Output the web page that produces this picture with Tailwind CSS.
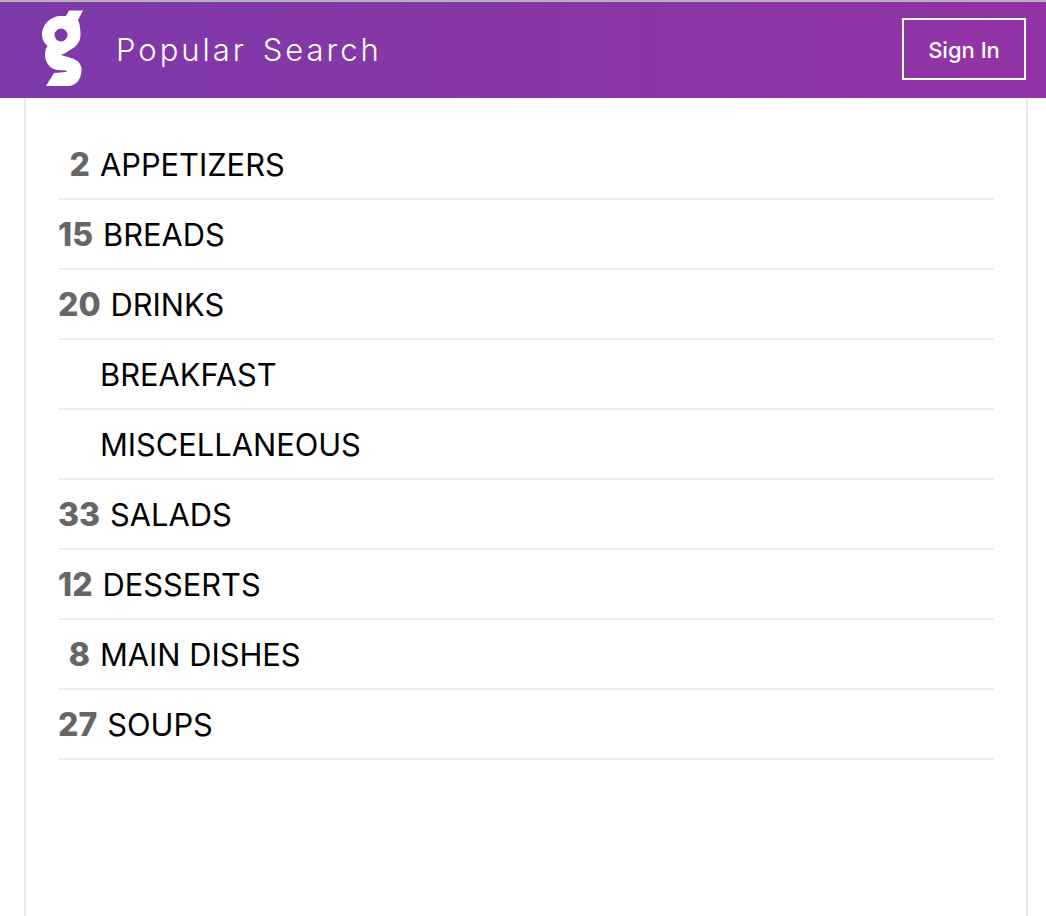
<!DOCTYPE html>
<html>
<head><title>Popular Search</title><script src="https://cdn.jsdelivr.net/npm/@tailwindcss/browser@4"></script></head>
<body class="bg-white font-['Inter',sans-serif] h-[916px] overflow-hidden flex flex-col">
  <header class="h-[98px] shrink-0 border-t-2 border-[#b5b0b8] bg-gradient-to-r from-[#7d39a9] to-[#9333a5] flex items-center pl-[42px] pr-[20px]">
    <svg class="w-[42px] h-[77px] shrink-0 -mt-[4px]" viewBox="0 0 42 77" fill="#fff">
      <path fill-rule="evenodd" d="M27 0.5 L41 0.5 L36 10 C38 14 38.5 20 38.5 25 C38.5 32 34 37 28 40 C25 42 22 44 19 45 C22 46 26 47 29 48 C36 50 39.5 54 39.5 60 C39.5 69 34 76 26 76 L4 76 L12 63 L24 62 C25 61.5 25 60.5 24 60.5 L15 60 C8 59 3 52 3 45 C3 41 4 38 5.5 36 C2 33 0 29 0 25 C0 14 9 6 19 6 C21 6 23 6 24 6 Z M19 18.5 A6.5 6.5 0 1 0 19.01 31.5 A6.5 6.5 0 1 0 19 18.5 Z"/>
    </svg>
    <h1 class="ml-[32px] -mt-[1px] text-[31px] font-[350] text-white tracking-[3px] [word-spacing:4px] leading-none">Popular Search</h1>
    <a href="#" class="ml-auto -mt-[2px] pt-[2px] w-[124px] h-[62px] border-2 border-white text-white text-[22px] font-medium flex items-center justify-center">Sign In</a>
  </header>
  <main class="flex-1 ml-[24px] mr-[18px] border-x-2 border-[#e9e9eb] px-[32px] pt-[32px]">
    <ul class="text-[30.8px] text-black">
      <li class="h-[70px] pt-[2px] border-b-2 border-[#efefef] flex items-center gap-[10px]"><b class="min-w-[32px] text-right text-[32px] font-extrabold text-[#666]">2</b><span>APPETIZERS</span></li>
      <li class="h-[70px] pt-[2px] border-b-2 border-[#efefef] flex items-center gap-[10px]"><b class="min-w-[32px] text-right text-[32px] font-extrabold text-[#666]">15</b><span>BREADS</span></li>
      <li class="h-[70px] pt-[2px] border-b-2 border-[#efefef] flex items-center gap-[10px]"><b class="min-w-[32px] text-right text-[32px] font-extrabold text-[#666]">20</b><span>DRINKS</span></li>
      <li class="h-[70px] pt-[2px] border-b-2 border-[#efefef] flex items-center gap-[10px]"><b class="min-w-[32px] text-right text-[32px] font-extrabold text-[#666]"></b><span>BREAKFAST</span></li>
      <li class="h-[70px] pt-[2px] border-b-2 border-[#efefef] flex items-center gap-[10px]"><b class="min-w-[32px] text-right text-[32px] font-extrabold text-[#666]"></b><span>MISCELLANEOUS</span></li>
      <li class="h-[70px] pt-[2px] border-b-2 border-[#efefef] flex items-center gap-[10px]"><b class="min-w-[32px] text-right text-[32px] font-extrabold text-[#666]">33</b><span>SALADS</span></li>
      <li class="h-[70px] pt-[2px] border-b-2 border-[#efefef] flex items-center gap-[10px]"><b class="min-w-[32px] text-right text-[32px] font-extrabold text-[#666]">12</b><span>DESSERTS</span></li>
      <li class="h-[70px] pt-[2px] border-b-2 border-[#efefef] flex items-center gap-[10px]"><b class="min-w-[32px] text-right text-[32px] font-extrabold text-[#666]">8</b><span>MAIN DISHES</span></li>
      <li class="h-[70px] pt-[2px] border-b-2 border-[#efefef] flex items-center gap-[10px]"><b class="min-w-[32px] text-right text-[32px] font-extrabold text-[#666]">27</b><span>SOUPS</span></li>
    </ul>
  </main>
</body>
</html>
